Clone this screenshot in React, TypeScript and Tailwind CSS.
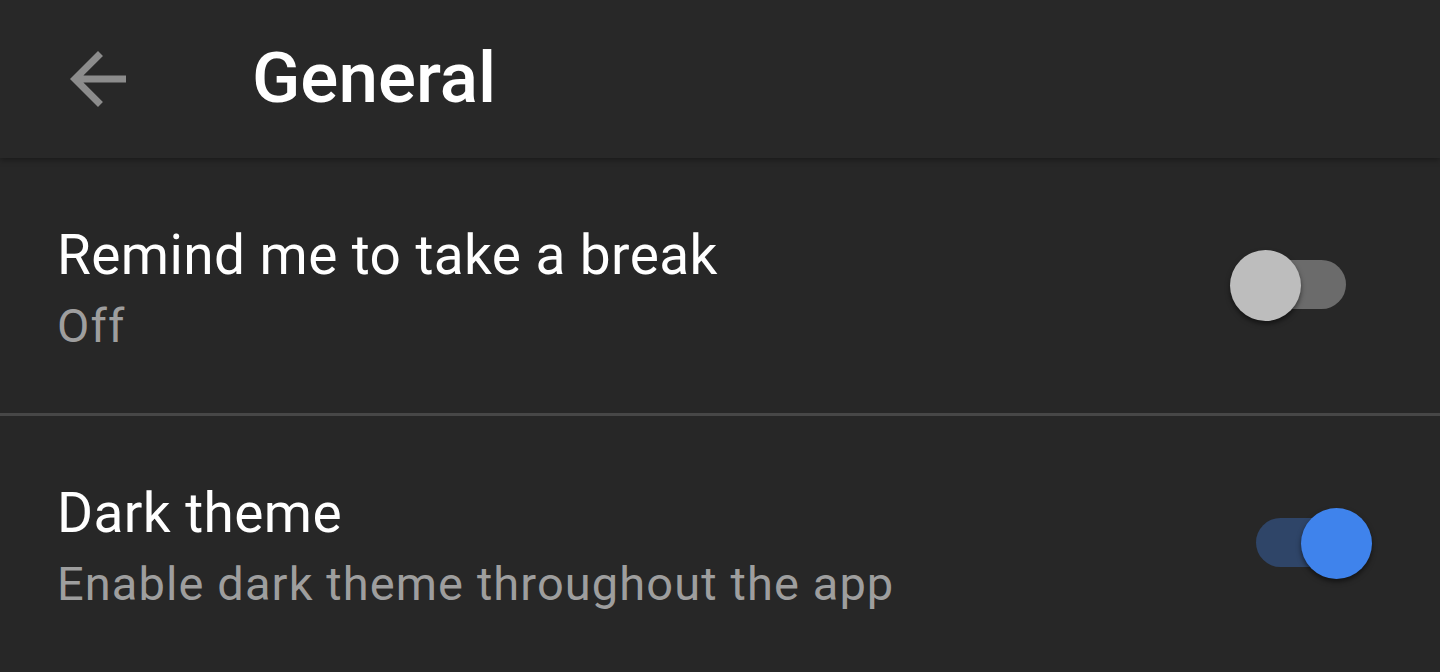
import React from "react";

function Switch({ on }: { on: boolean }) {
  return (
    <div className="relative w-[142px] h-[71px] shrink-0">
      <div
        className={
          on
            ? "absolute left-[26px] top-[10px] w-[90px] h-[49px] rounded-full bg-[#2f4568]"
            : "absolute left-[26px] top-[10px] w-[90px] h-[49px] rounded-full bg-[#6b6b6b]"
        }
      />
      <div
        className={
          on
            ? "absolute left-[71px] top-0 w-[71px] h-[71px] rounded-full bg-[#3f83ec] shadow-[0_3px_5px_rgba(0,0,0,0.5)]"
            : "absolute left-0 top-0 w-[71px] h-[71px] rounded-full bg-[#bdbdbd] shadow-[0_3px_5px_rgba(0,0,0,0.5)]"
        }
      />
    </div>
  );
}

function Row({ title, subtitle, on, height }: { title: string; subtitle: string; on: boolean; height: string }) {
  return (
    <div className={`${height} flex items-start justify-between pl-[57px] pr-[68px]`}>
      <div className="flex flex-col pt-[65px]">
        <div className="text-[55px] leading-[64px] tracking-[0.4px] text-white">{title}</div>
        <div className="mt-[11px] text-[47px] leading-[56px] tracking-[1.1px] text-[#9e9e9e]">{subtitle}</div>
      </div>
      <div className="mt-[92px]">
        <Switch on={on} />
      </div>
    </div>
  );
}

export default function App() {
  return (
    <div
      className="w-[1440px] h-[672px] overflow-hidden bg-[#272727] flex flex-col"
      style={{ fontFamily: "Roboto, 'Noto Sans', sans-serif" }}
    >
      <header className="relative z-10 h-[158px] shrink-0 bg-[#282828] flex items-center shadow-[0_2px_6px_rgba(0,0,0,0.35)]">
        <div className="w-[254px] pl-[56px] flex items-center">
          <svg width="84" height="84" viewBox="0 0 24 24" className="text-[#8c8c8c]">
            <path fill="currentColor" d="M20 11H7.83l5.59-5.59L12 4l-8 8 8 8 1.41-1.41L7.83 13H20v-2z" />
          </svg>
        </div>
        <h1 className="text-[71px] font-medium text-white leading-none -mt-[4px] -ml-[2px]">General</h1>
      </header>
      <Row title="Remind me to take a break" subtitle="Off" on={false} height="h-[255px]" />
      <div className="h-[3px] shrink-0 bg-[#474747]" />
      <Row title="Dark theme" subtitle="Enable dark theme throughout the app" on={true} height="h-[256px]" />
    </div>
  );
}
